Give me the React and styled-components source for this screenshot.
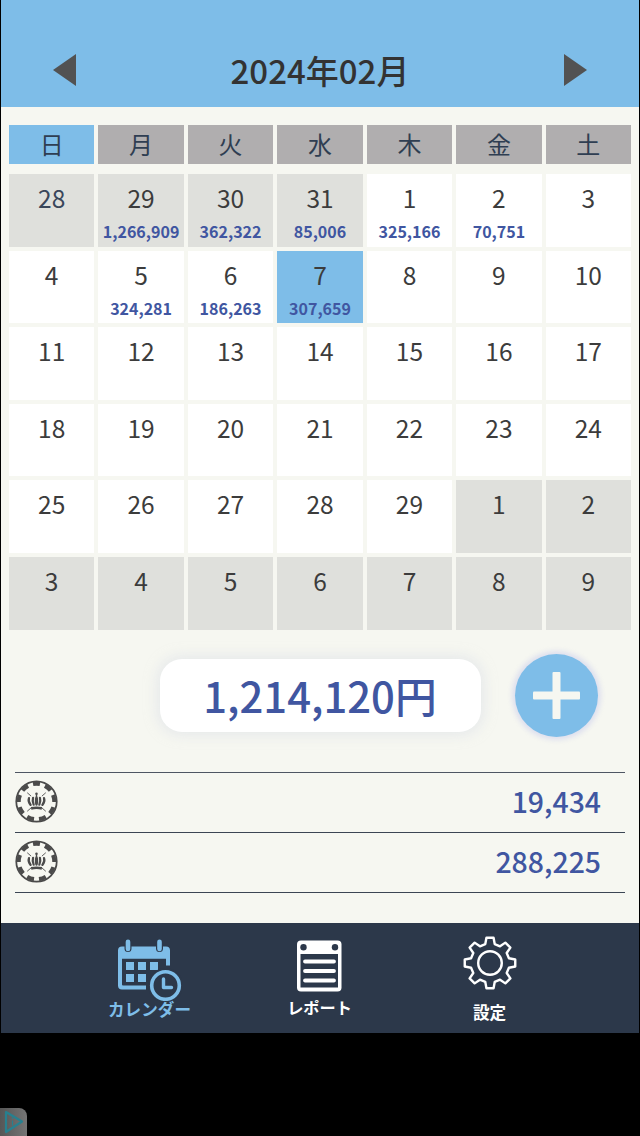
import React, { useState } from "react";
import styled, { createGlobalStyle } from "styled-components";

const WEEKDAYS = ["日", "月", "火", "水", "木", "金", "土"];

const AMOUNTS = {
  "1-29": "1,266,909",
  "1-30": "362,322",
  "1-31": "85,006",
  "2-1": "325,166",
  "2-2": "70,751",
  "2-5": "324,281",
  "2-6": "186,263",
  "2-7": "307,659",
};

const range = (month, from, to) =>
  Array.from({ length: to - from + 1 }, (_, i) => ({
    key: `${month}-${from + i}`,
    day: from + i,
    outside: month !== 2,
  }));

const DAYS = [...range(1, 28, 31), ...range(2, 1, 29), ...range(3, 1, 9)];

const ENTRIES = ["19,434", "288,225"];

// 8 teeth around the centre, each one a small trapezoid
const gearPath = () => {
  const point = (deg, r) => {
    const a = (deg * Math.PI) / 180;
    return `${(27 + r * Math.sin(a)).toFixed(2)} ${(27 - r * Math.cos(a)).toFixed(2)}`;
  };
  let d = "";
  for (let i = 0; i < 8; i++) {
    const a = i * 45;
    d += `${i ? "L" : "M"}${point(a - 14, 19.5)} L${point(a - 8, 25.5)} L${point(a + 8, 25.5)} L${point(a + 14, 19.5)} `;
  }
  return d + "Z";
};

const ChipIcon = () => (
  <svg width="43" height="43" viewBox="0 0 44 44" fill="none" stroke="#4b4b4b">
    <circle cx="22" cy="22" r="20.7" strokeWidth="1.8" />
    <circle cx="22" cy="22" r="18.2" strokeWidth="4.2" pathLength="90" strokeDasharray="5.8 4.2" strokeDashoffset="-4.6" />
    <path d="M12.500 13l4 3.500M31.500 13l-4 3.500M12.500 32l4-3.500M31.500 32l-4-3.500" strokeWidth="0.9" />
    <g fill="#4b4b4b" stroke="none">
      <circle cx="22" cy="14" r="1.3" />
      <path d="M21.300 14.500h1.400v3h-1.400z" />
      <ellipse cx="22" cy="21.500" rx="1.700" ry="4.800" />
    </g>
    <g strokeWidth="2.3" strokeLinecap="round">
      <path d="M18.500 18.200q-1 3.300.6 7M25.500 18.200q1 3.300-.6 7" />
      <path d="M14.300 18.500q-1.200 3.500 1.700 7M29.700 18.500q1.200 3.500-1.700 7" />
    </g>
    <path d="M16.500 29q5.500-1.200 11 0" strokeWidth="2.700" />
  </svg>
);

const CalendarIcon = () => (
  <svg width="64" height="62" viewBox="0 1.5 64 62">
    <path d="M4 9h44q4 0 4 4v15h-4v-7H4v26q0 1 1 1h23v4H4q-4 0-4-4V13q0-4 4-4z" fill="#7ebde8" />
    <path d="M1 12h50v9H1z" fill="#7ebde8" />
    <g stroke="#2c384a" strokeWidth="7" strokeLinecap="round">
      <path d="M10 5v6M41.500 5v6" />
    </g>
    <g stroke="#7ebde8" strokeWidth="4.600" strokeLinecap="round">
      <path d="M10 4.200v7.300M41.500 4.200v7.300" />
    </g>
    <path d="M8 24.500h8v8H8zM20 24.500h8v8h-8zM32 24.500h8v8h-8zM8 36.500h8v8H8zM20 36.500h8v8h-8z" fill="#7ebde8" />
    <circle cx="47.500" cy="48" r="17.500" fill="#2c384a" />
    <circle cx="47.500" cy="48" r="13.800" fill="none" stroke="#7ebde8" strokeWidth="3.600" />
    <path d="M45.500 41.500v8.500h8" fill="none" stroke="#7ebde8" strokeWidth="3.400" strokeLinecap="round" strokeLinejoin="round" />
  </svg>
);

const ReportIcon = () => (
  <svg width="46" height="52" viewBox="0 0 46 52">
    <rect x="0" y="0.500" width="44.500" height="51" rx="4" fill="#fff" />
    <path d="M3.500 14H41v33.500H3.500z" fill="#2c384a" />
    <circle cx="6.500" cy="7.300" r="3.200" fill="#2c384a" />
    <circle cx="38" cy="7.300" r="3.200" fill="#2c384a" />
    <path d="M8 21.500h29M8 31h29M8 40.500h29" stroke="#fff" strokeWidth="3.800" strokeLinecap="round" />
  </svg>
);

const GearIcon = () => (
  <svg width="54" height="54" viewBox="0 0 54 54" fill="none" stroke="#fff" strokeWidth="2.400" strokeLinejoin="round">
    <path d={gearPath()} />
    <circle cx="27" cy="27" r="11.800" />
  </svg>
);

const AdIcon = () => (
  <svg width="22" height="26" viewBox="0 0 22 26" fill="none" stroke="#27808f">
    <path d="M3 3l16 9.500L3 23z" strokeWidth="2.200" strokeLinejoin="round" />
    <path d="M9.500 11.500v5M9.500 8.500v1.500" strokeWidth="1.200" />
  </svg>
);

const App = () => {
  const [selected, setSelected] = useState("2-7");

  return (
    <Screen>
      <GlobalStyle />
      <Header>
        <ArrowButton aria-label="前の月">
          <svg width="23" height="32" viewBox="0 0 23 32">
            <path d="M23 0v32L0 16z" fill="#525252" />
          </svg>
        </ArrowButton>
        <Title>2024年02月</Title>
        <ArrowButton aria-label="次の月">
          <svg width="23" height="32" viewBox="0 0 23 32">
            <path d="M0 0v32l23-16z" fill="#525252" />
          </svg>
        </ArrowButton>
      </Header>

      <Main>
        <WeekRow>
          {WEEKDAYS.map((name, i) => (
            <Weekday key={name} $active={i === 0}>{name}</Weekday>
          ))}
        </WeekRow>
        <DayGrid>
          {DAYS.map(({ key, day, outside }) => (
            <DayCell
              key={key}
              $outside={outside}
              $selected={key === selected}
              onClick={() => setSelected(key)}
            >
              <DayNumber $navy={key === "1-28"}>{day}</DayNumber>
              {AMOUNTS[key] && <DayAmount>{AMOUNTS[key]}</DayAmount>}
            </DayCell>
          ))}
        </DayGrid>

        <Summary>
          <Total>1,214,120円</Total>
          <AddButton aria-label="追加">
            <svg width="47" height="47" viewBox="0 0 47 47">
              <rect x="19.500" width="8" height="47" rx="1" fill="#f6f7f1" />
              <rect y="19.500" width="47" height="8" rx="1" fill="#f6f7f1" />
            </svg>
          </AddButton>
        </Summary>

        <EntryList>
          {ENTRIES.map((amount) => (
            <Entry key={amount}>
              <ChipIcon />
              <EntryAmount>{amount}</EntryAmount>
            </Entry>
          ))}
        </EntryList>
      </Main>

      <TabBar>
        <Tab $top={16} $color="#7ebde8">
          <CalendarIcon />
          <TabLabel $gap={-4}>カレンダー</TabLabel>
        </Tab>
        <Tab $top={17} $color="#fff">
          <ReportIcon />
          <TabLabel $gap={3} $size={16.2}>レポート</TabLabel>
        </Tab>
        <Tab $top={13} $color="#fff">
          <GearIcon />
          <TabLabel $gap={10}>設定</TabLabel>
        </Tab>
      </TabBar>

      <AdArea>
        <AdBadge>
          <AdIcon />
        </AdBadge>
      </AdArea>
    </Screen>
  );
};

export default App;

const GlobalStyle = createGlobalStyle`
  * {
    box-sizing: border-box;
  }
  body {
    margin: 0;
    background: #000;
    font-family: "Noto Sans CJK JP", sans-serif;
  }
  svg {
    display: block;
    flex-shrink: 0;
  }
`;

const Screen = styled.div`
  width: 640px;
  height: 1136px;
  padding: 0 1px;
  background: #000;
  display: flex;
  flex-direction: column;
  overflow: hidden;
`;

const Header = styled.header`
  height: 107px;
  padding: 33px 52px 0;
  background: #7ebde8;
  display: flex;
  justify-content: space-between;
  align-items: center;
`;

const ArrowButton = styled.button`
  padding: 0;
  border: none;
  background: transparent;
  cursor: pointer;
`;

const Title = styled.h1`
  margin: 0;
  font-size: 33px;
  font-weight: 500;
  line-height: 48px;
  color: #333;
`;

const Main = styled.main`
  height: 816px;
  padding: 18px 8px 0;
  background: #f6f7f1;
`;

const WeekRow = styled.div`
  display: grid;
  grid-template-columns: repeat(7, 1fr);
  column-gap: 4.2px;
  margin-bottom: 10px;
`;

const Weekday = styled.div`
  height: 39px;
  background: ${({ $active }) => ($active ? "#7ebde8" : "#b0aeaf")};
  color: #2f3e52;
  font-size: 24px;
  line-height: 38px;
  text-align: center;
`;

const DayGrid = styled.div`
  display: grid;
  grid-template-columns: repeat(7, 1fr);
  grid-auto-rows: 72.6px;
  gap: 4px 4.2px;
`;

const DayCell = styled.div`
  display: flex;
  flex-direction: column;
  align-items: center;
  padding-top: 6px;
  cursor: pointer;
  background: ${({ $outside, $selected }) =>
    $selected ? "#7ebde8" : $outside ? "#dfe0dc" : "#fff"};
`;

const DayNumber = styled.span`
  font-size: 24.5px;
  line-height: 36px;
  color: ${({ $navy }) => ($navy ? "#3a465a" : "#3c3c3c")};
`;

const DayAmount = styled.span`
  margin-top: 3px;
  font-size: 16px;
  font-weight: 700;
  line-height: 24px;
  color: #4056a1;
`;

const Summary = styled.div`
  display: flex;
  align-items: center;
  justify-content: flex-end;
  gap: 34px;
  height: 83px;
  margin-top: 24px;
  padding-right: 33px;
`;

const Total = styled.div`
  width: 321px;
  height: 73px;
  padding-right: 1px;
  border-radius: 22px;
  background: #fff;
  box-shadow: 0 0 12px 4px rgba(220, 224, 232, 0.55);
  color: #4056a1;
  font-size: 41.8px;
  font-weight: 500;
  line-height: 72px;
  text-align: center;
`;

const AddButton = styled.button`
  width: 83px;
  height: 83px;
  padding: 0;
  border: none;
  border-radius: 50%;
  background: #7ebde8;
  box-shadow: 0 0 5px 3px rgba(215, 218, 238, 0.8);
  display: flex;
  align-items: center;
  justify-content: center;
  cursor: pointer;
`;

const EntryList = styled.div`
  margin: 35px 6px 0;
  border-top: 1px solid #4e5663;
`;

const Entry = styled.div`
  height: 60px;
  padding: 0 24px 2px 0;
  border-bottom: 1px solid #3c4654;
  display: flex;
  justify-content: space-between;
  align-items: center;
`;

const EntryAmount = styled.span`
  font-size: 28.4px;
  font-weight: 500;
  line-height: 40px;
  color: #4056a1;
`;

const TabBar = styled.nav`
  height: 110px;
  padding: 0 107px 0 106px;
  background: #2c384a;
  display: flex;
  justify-content: space-between;
`;

const Tab = styled.div`
  width: 85px;
  padding-top: ${({ $top }) => $top}px;
  color: ${({ $color }) => $color};
  display: flex;
  flex-direction: column;
  align-items: center;
  cursor: pointer;
`;

const TabLabel = styled.span`
  margin-top: ${({ $gap }) => $gap}px;
  font-size: ${({ $size = 16.6 }) => $size}px;
  font-weight: 700;
  line-height: 24px;
  white-space: nowrap;
`;

const AdArea = styled.footer`
  flex: 1;
  margin-left: -1px;
  display: flex;
  align-items: flex-end;
`;

const AdBadge = styled.div`
  width: 27px;
  height: 28px;
  padding: 1px 0 0 3px;
  border-top-right-radius: 8px;
  background: linear-gradient(90deg, #565656, #757575);
`;
